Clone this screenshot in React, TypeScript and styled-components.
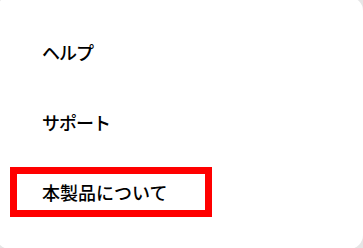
import React from "react";
import styled, { createGlobalStyle } from "styled-components";

const GlobalStyle = createGlobalStyle`
  html, body {
    margin: 0;
    padding: 0;
    background: #e6e6e6;
    overflow: hidden;
  }
  body {
    font-family: "Noto Sans CJK JP", "Noto Sans", sans-serif;
  }
`;

// white menu sheet, corners slightly cropped by the window
const Sheet = styled.div`
  width: 367px;
  height: 252px;
  margin: -3px 0 0 -4px;
  background: #ffffff;
  border-radius: 14px;
  padding-top: 20px;
  box-sizing: border-box;
  display: flex;
  flex-direction: column;
`;

const Row = styled.div`
  height: 70px;
  display: flex;
  align-items: center;
  padding-left: ${(p: { $inset?: number }) => p.$inset ?? 46}px;
`;

const Label = styled.span`
  font-size: 18px;
  font-weight: 500;
  line-height: 1;
  color: #000000;
  letter-spacing: ${(p: { $tight?: boolean }) => (p.$tight ? "-1px" : "0")};
`;

// red annotation frame around the selected entry
const Highlight = styled.div`
  width: 202px;
  height: 50px;
  box-sizing: border-box;
  border: 7px solid #ff0000;
  display: flex;
  align-items: center;
  padding-left: 25px;
`;

export default function App() {
  return (
    <>
      <GlobalStyle />
      <Sheet>
        <Row>
          <Label $tight>ヘルプ</Label>
        </Row>
        <Row>
          <Label $tight>サポート</Label>
        </Row>
        <Row $inset={14}>
          <Highlight>
            <Label>本製品について</Label>
          </Highlight>
        </Row>
      </Sheet>
    </>
  );
}
